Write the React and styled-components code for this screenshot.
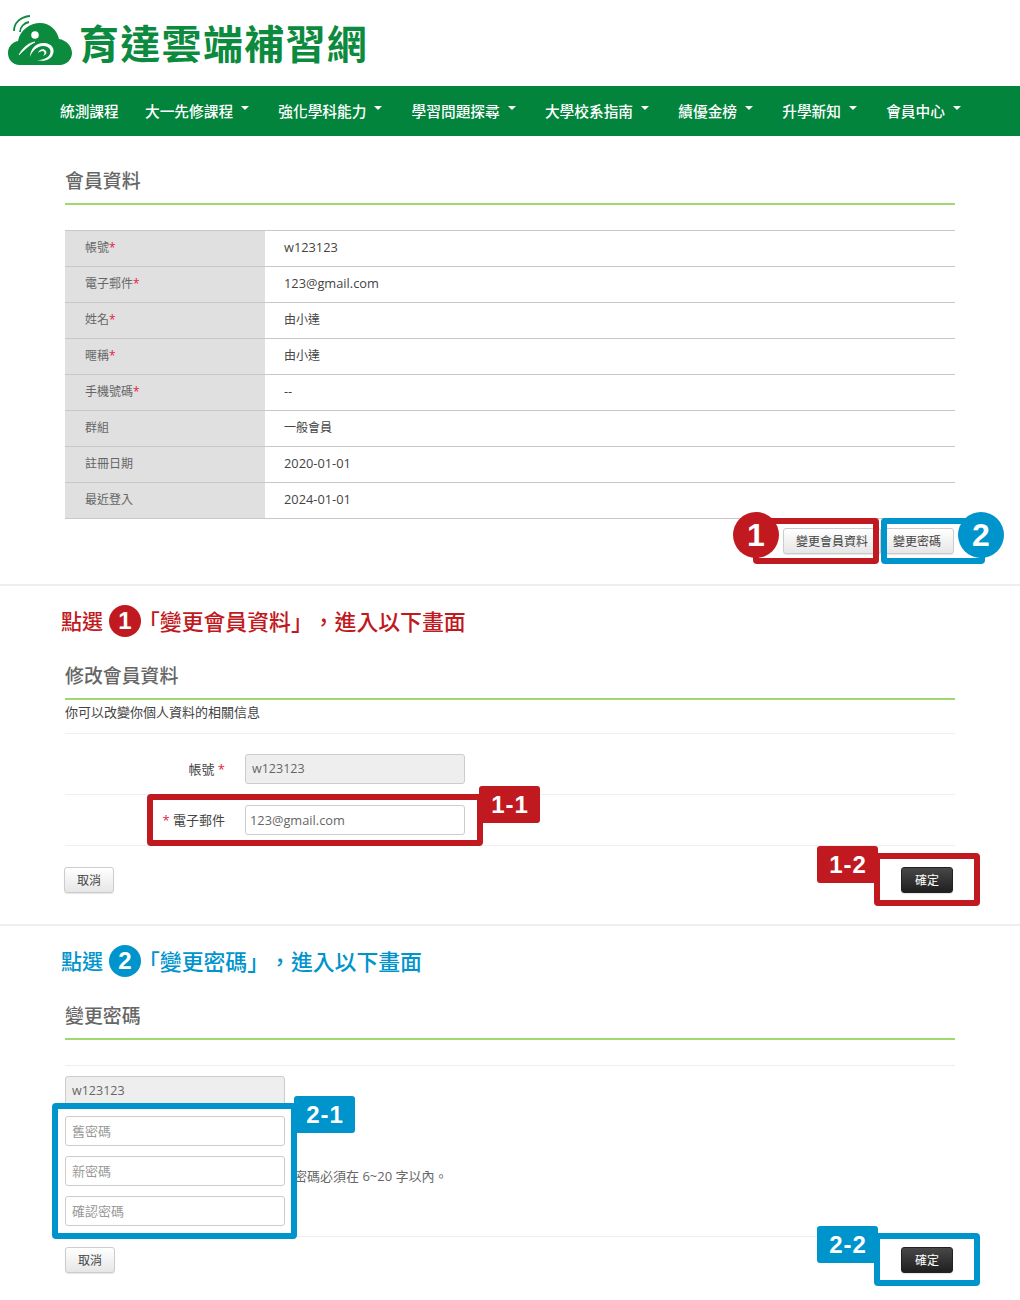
import React from "react";
import styled, { createGlobalStyle } from "styled-components";

const RED = "#c11920";
const BLUE = "#0094cd";

const GlobalStyle = createGlobalStyle`
  html, body {
    margin: 0;
    padding: 0;
    background: #fff;
    font-family: "Open Sans", "Noto Sans CJK TC", sans-serif;
    color: #444;
  }
  * { box-sizing: border-box; }
`;

const navItems = [
  { title: "統測課程" },
  { title: "大一先修課程", caret: true },
  { title: "強化學科能力", caret: true },
  { title: "學習問題探尋", caret: true },
  { title: "大學校系指南", caret: true },
  { title: "績優金榜", caret: true },
  { title: "升學新知", caret: true },
  { title: "會員中心", caret: true },
];

const profile = [
  { label: "帳號", value: "w123123", required: true },
  { label: "電子郵件", value: "123@gmail.com", required: true },
  { label: "姓名", value: "由小達", required: true, cjk: true },
  { label: "暱稱", value: "由小達", required: true, cjk: true },
  { label: "手機號碼", value: "--", required: true },
  { label: "群組", value: "一般會員", cjk: true },
  { label: "註冊日期", value: "2020-01-01" },
  { label: "最近登入", value: "2024-01-01" },
];

const Logo = () => (
  <LogoIcon viewBox="0 0 75 60" aria-hidden="true">
    <path
      d="M16 54C8 54 4 48 4 42C4 35 9 31 14 30C16 19 26 12 36 12C46 12 53 19 55 28C62 29 68 35 68 42C68 49 62 54 56 54Z"
      fill="#0c8a3e"
    />
    <path d="M10 20C10 12 16 6 26 5" fill="none" stroke="#0c8a3e" strokeWidth="1.8" />
    <path d="M16 21C16 16 20 12 25 11" fill="none" stroke="#0c8a3e" strokeWidth="1.8" />
    <circle cx="31" cy="24" r="3.8" fill="#fff" />
    <path d="M15 44C19 36 25 32 31 31C25 34 20 39 15 44Z" fill="#fff" stroke="#fff" strokeWidth="0.8" />
    <path
      d="M26 46C26 37 33 31 41 32C48 33 51 38 49 43C47 49 40 51 33 49C39 49 44 47 46 43C48 38 44 35 39 35C33 35 28 40 26 46Z"
      fill="#fff"
    />
    <path d="M34 42C35 38 40 37 42 40C43 42 42 44 39 45C41 43 41 41 39 40C37 40 35 41 34 42Z" fill="#fff" />
  </LogoIcon>
);

const Star = styled.span`
  color: #e8223a;
`;

const Section = ({ color, number, before, children }) => (
  <Heading $color={color}>
    <HeadingLead>{before}</HeadingLead>
    <HeadingBadge $color={color}>{number}</HeadingBadge>
    <HeadingText>{children}</HeadingText>
  </Heading>
);

export default function App() {
  return (
    <Page>
      <GlobalStyle />
      <Header>
        <Logo />
        <LogoText>育達雲端補習網</LogoText>
      </Header>

      <NavBar>
        {navItems.map((item) => (
          <NavItem key={item.title} $caret={item.caret}>
            {item.title}
            {item.caret && <Caret />}
          </NavItem>
        ))}
      </NavBar>

      <Block>
        <PageTitle>會員資料</PageTitle>
        <InfoTable>
          <tbody>
            {profile.map((row) => (
              <tr key={row.label}>
                <InfoLabel>
                  {row.label}
                  {row.required && <Star>*</Star>}
                </InfoLabel>
                <InfoValue $cjk={row.cjk}>{row.value}</InfoValue>
              </tr>
            ))}
          </tbody>
        </InfoTable>
        <ProfileActions>
          <Button>變更會員資料</Button>
          <Button>變更密碼</Button>
        </ProfileActions>
      </Block>

      <Divider />

      <Block>
        <Section color={RED} number="1" before="點選">
          「變更會員資料」，進入以下畫面
        </Section>
        <PageTitle>修改會員資料</PageTitle>
        <Description>你可以改變你個人資料的相關信息</Description>
        <FormRow $top={20}>
          <FieldLabel>
            帳號 <Star>*</Star>
          </FieldLabel>
          <TextInput value="w123123" disabled readOnly />
        </FormRow>
        <FormRow $top={10}>
          <FieldLabel>
            <Star>*</Star> 電子郵件
          </FieldLabel>
          <TextInput $tight value="123@gmail.com" readOnly />
        </FormRow>
        <FormActions $gutter={-1}>
          <Button $wide>取消</Button>
          <DarkButton>確定</DarkButton>
        </FormActions>
      </Block>

      <Divider />

      <Block>
        <Section color={BLUE} number="2" before="點選">
          「變更密碼」，進入以下畫面
        </Section>
        <PageTitle>變更密碼</PageTitle>
        <Spacer />
        <PasswordRow>
          <PasswordFields>
            <TextInput value="w123123" disabled readOnly />
            <TextInput placeholder="舊密碼" readOnly />
            <TextInput placeholder="新密碼" readOnly />
            <TextInput placeholder="確認密碼" readOnly />
          </PasswordFields>
          <Hint>密碼必須在 6~20 字以內。</Hint>
        </PasswordRow>
        <FormActions $gutter={0}>
          <Button $wide>取消</Button>
          <DarkButton>確定</DarkButton>
        </FormActions>
      </Block>

      <Frame $color={RED} $x={753} $y={518} $w={126} $h={46} />
      <Frame $color={BLUE} $x={881} $y={518} $w={104} $h={46} />
      <StepCircle $color={RED} $x={733} $y={512}>1</StepCircle>
      <StepCircle $color={BLUE} $x={958} $y={512}>2</StepCircle>

      <Frame $color={RED} $x={147} $y={794} $w={336} $h={52} />
      <Tag $color={RED} $x={479} $y={786}>1-1</Tag>
      <Frame $color={RED} $x={874} $y={853} $w={106} $h={53} />
      <Tag $color={RED} $x={817} $y={846}>1-2</Tag>

      <Frame $color={BLUE} $x={52} $y={1103} $w={245} $h={136} />
      <Tag $color={BLUE} $x={294} $y={1096}>2-1</Tag>
      <Frame $color={BLUE} $x={874} $y={1233} $w={106} $h={53} />
      <Tag $color={BLUE} $x={817} $y={1226}>2-2</Tag>
    </Page>
  );
}

const Page = styled.div`
  position: relative;
  width: 1020px;
  height: 1300px;
  overflow: hidden;
`;

const Header = styled.header`
  display: flex;
  align-items: center;
  height: 86px;
  padding: 2px 0 0 4px;
`;

const LogoIcon = styled.svg`
  width: 75px;
  height: 60px;
  flex: none;
  margin-top: -6px;
`;

const LogoText = styled.div`
  margin-top: -5px;
  color: #0c8a3e;
  font-family: "Noto Sans CJK TC", sans-serif;
  font-size: 40px;
  font-weight: 700;
  letter-spacing: 1.3px;
  line-height: 44px;
  white-space: nowrap;
`;

const NavBar = styled.nav`
  display: flex;
  align-items: center;
  height: 50px;
  padding-left: 45.4px;
  background: #02843c;
`;

const NavItem = styled.div`
  display: flex;
  align-items: center;
  padding: 0 ${(props) => (props.$caret ? "14.6px" : "11.6px")} 0 14.6px;
  color: #fff;
  font-family: "Noto Sans CJK TC", sans-serif;
  font-size: 14.7px;
  font-weight: 500;
  line-height: 50px;
  white-space: nowrap;
`;

const Caret = styled.span`
  width: 0;
  height: 0;
  margin: -7px 0 0 8px;
  border-top: 4px solid #fff;
  border-left: 4px solid transparent;
  border-right: 4px solid transparent;
`;

const Block = styled.section`
  padding: 0 65px;
  &:first-of-type {
    padding-top: 25px;
  }
`;

const Divider = styled.div`
  height: 2px;
  background: #eee;
`;

const PageTitle = styled.h2`
  margin: 0;
  padding-bottom: 2px;
  border-bottom: 2px solid #a0d870;
  color: #666;
  font-size: 18.9px;
  font-weight: 500;
  line-height: 40px;
`;

const InfoTable = styled.table`
  width: 100%;
  margin-top: 25px;
  border-collapse: collapse;
  border-bottom: 1px solid #c8c8c8;

  tr {
    height: 36px;
    border-top: 1px solid #c8c8c8;
  }
`;

const InfoLabel = styled.td`
  width: 200px;
  padding: 0 0 3px 20px;
  background: #e0e0e0;
  color: #666;
  font-size: 12px;
`;

const InfoValue = styled.td`
  padding: 0 0 3px 19px;
  color: #444;
  font-size: ${(props) => (props.$cjk ? "12px" : "12.8px")};
`;

const ProfileActions = styled.div`
  display: flex;
  justify-content: flex-end;
  margin: 9px 1px 30px 0;

  button + button {
    margin-left: -1px;
  }
`;

const Button = styled.button`
  width: ${(props) => (props.$wide ? "50px" : "auto")};
  height: 26px;
  padding: 2px 12px 0;
  border: 1px solid #ccc;
  border-radius: 3px;
  background: linear-gradient(#fff, #e6e6e6);
  box-shadow: 0 1px 1px rgba(0, 0, 0, 0.1);
  color: #444;
  font-family: inherit;
  font-size: 12px;
  line-height: 22px;
  white-space: nowrap;
`;

const DarkButton = styled(Button)`
  width: 52px;
  border-color: #222;
  background: linear-gradient(#484848, #1f1f1f);
  color: #fff;
`;

const Heading = styled.div`
  display: flex;
  align-items: center;
  height: 70px;
  margin-left: -4px;
  color: ${(props) => props.$color};
  font-family: "Noto Sans CJK TC", sans-serif;
  font-size: 21.85px;
  font-weight: 500;
  text-spacing-trim: space-all;
  white-space: nowrap;
`;

const HeadingLead = styled.span`
  margin-top: -2px;
  font-size: 21px;
`;

const HeadingBadge = styled.span`
  display: flex;
  align-items: center;
  justify-content: center;
  width: 32px;
  height: 32px;
  margin-left: 6px;
  border-radius: 50%;
  background: ${(props) => props.$color};
  color: #fff;
  font-family: "Liberation Sans", sans-serif;
  font-size: 24px;
  font-weight: 700;
`;

const HeadingText = styled.span`
  margin: -2px 0 0 -3px;
`;

const Description = styled.div`
  height: 34px;
  border-bottom: 1px solid #eee;
  color: #444;
  font-size: 13px;
  line-height: 24px;
`;

const FormRow = styled.div`
  display: flex;
  align-items: center;
  padding: ${(props) => props.$top}px 0 10px;
  border-bottom: 1px solid #eee;
`;

const FieldLabel = styled.label`
  width: 160px;
  margin-right: 20px;
  padding-bottom: 2px;
  color: #444;
  font-size: 13px;
  text-align: right;
`;

const TextInput = styled.input`
  display: block;
  width: 220px;
  height: 30px;
  padding: 0 ${(props) => (props.$tight ? "4px" : "6px")} ${(props) => (props.disabled ? "2px" : "0")};
  border: 1px solid #ccc;
  border-radius: 3px;
  background: ${(props) => (props.disabled ? "#eee" : "#fff")};
  color: #666;
  font-family: inherit;
  font-size: ${(props) => (props.$tight ? "12.8px" : "12.5px")};
  outline: none;

  &::placeholder {
    color: #999;
    font-size: 13px;
  }
`;

const FormActions = styled.div`
  display: flex;
  justify-content: space-between;
  margin-left: ${(props) => props.$gutter}px;
  padding: ${(props) => (props.$gutter ? "21px 2px 31px 0" : "10px 2px 0 0")};
`;

const Spacer = styled.div`
  height: 26px;
  border-bottom: 1px solid #eee;
`;

const PasswordRow = styled.div`
  display: flex;
  padding: 10px 0;
  border-bottom: 1px solid #eee;
`;

const PasswordFields = styled.div`
  display: flex;
  flex-direction: column;
  gap: 10px;
`;

const Hint = styled.div`
  align-self: center;
  margin: 48px 0 0 9px;
  color: #666;
  font-size: 13px;
`;

const Frame = styled.div`
  position: absolute;
  left: ${(props) => props.$x}px;
  top: ${(props) => props.$y}px;
  width: ${(props) => props.$w}px;
  height: ${(props) => props.$h}px;
  border: 6px solid ${(props) => props.$color};
  border-radius: 4px;
`;

const StepCircle = styled.div`
  position: absolute;
  left: ${(props) => props.$x}px;
  top: ${(props) => props.$y}px;
  display: flex;
  align-items: center;
  justify-content: center;
  width: 46px;
  height: 46px;
  border-radius: 50%;
  background: ${(props) => props.$color};
  color: #fff;
  font-family: "Liberation Sans", sans-serif;
  font-size: 32px;
  font-weight: 700;
`;

const Tag = styled.div`
  position: absolute;
  left: ${(props) => props.$x}px;
  top: ${(props) => props.$y}px;
  display: flex;
  align-items: center;
  justify-content: center;
  width: 61px;
  height: 37px;
  padding: 1px 0 0 1px;
  border-radius: 3px;
  background: ${(props) => props.$color};
  color: #fff;
  font-family: "Liberation Sans", sans-serif;
  font-size: 24px;
  font-weight: 700;
  letter-spacing: 1px;
`;
